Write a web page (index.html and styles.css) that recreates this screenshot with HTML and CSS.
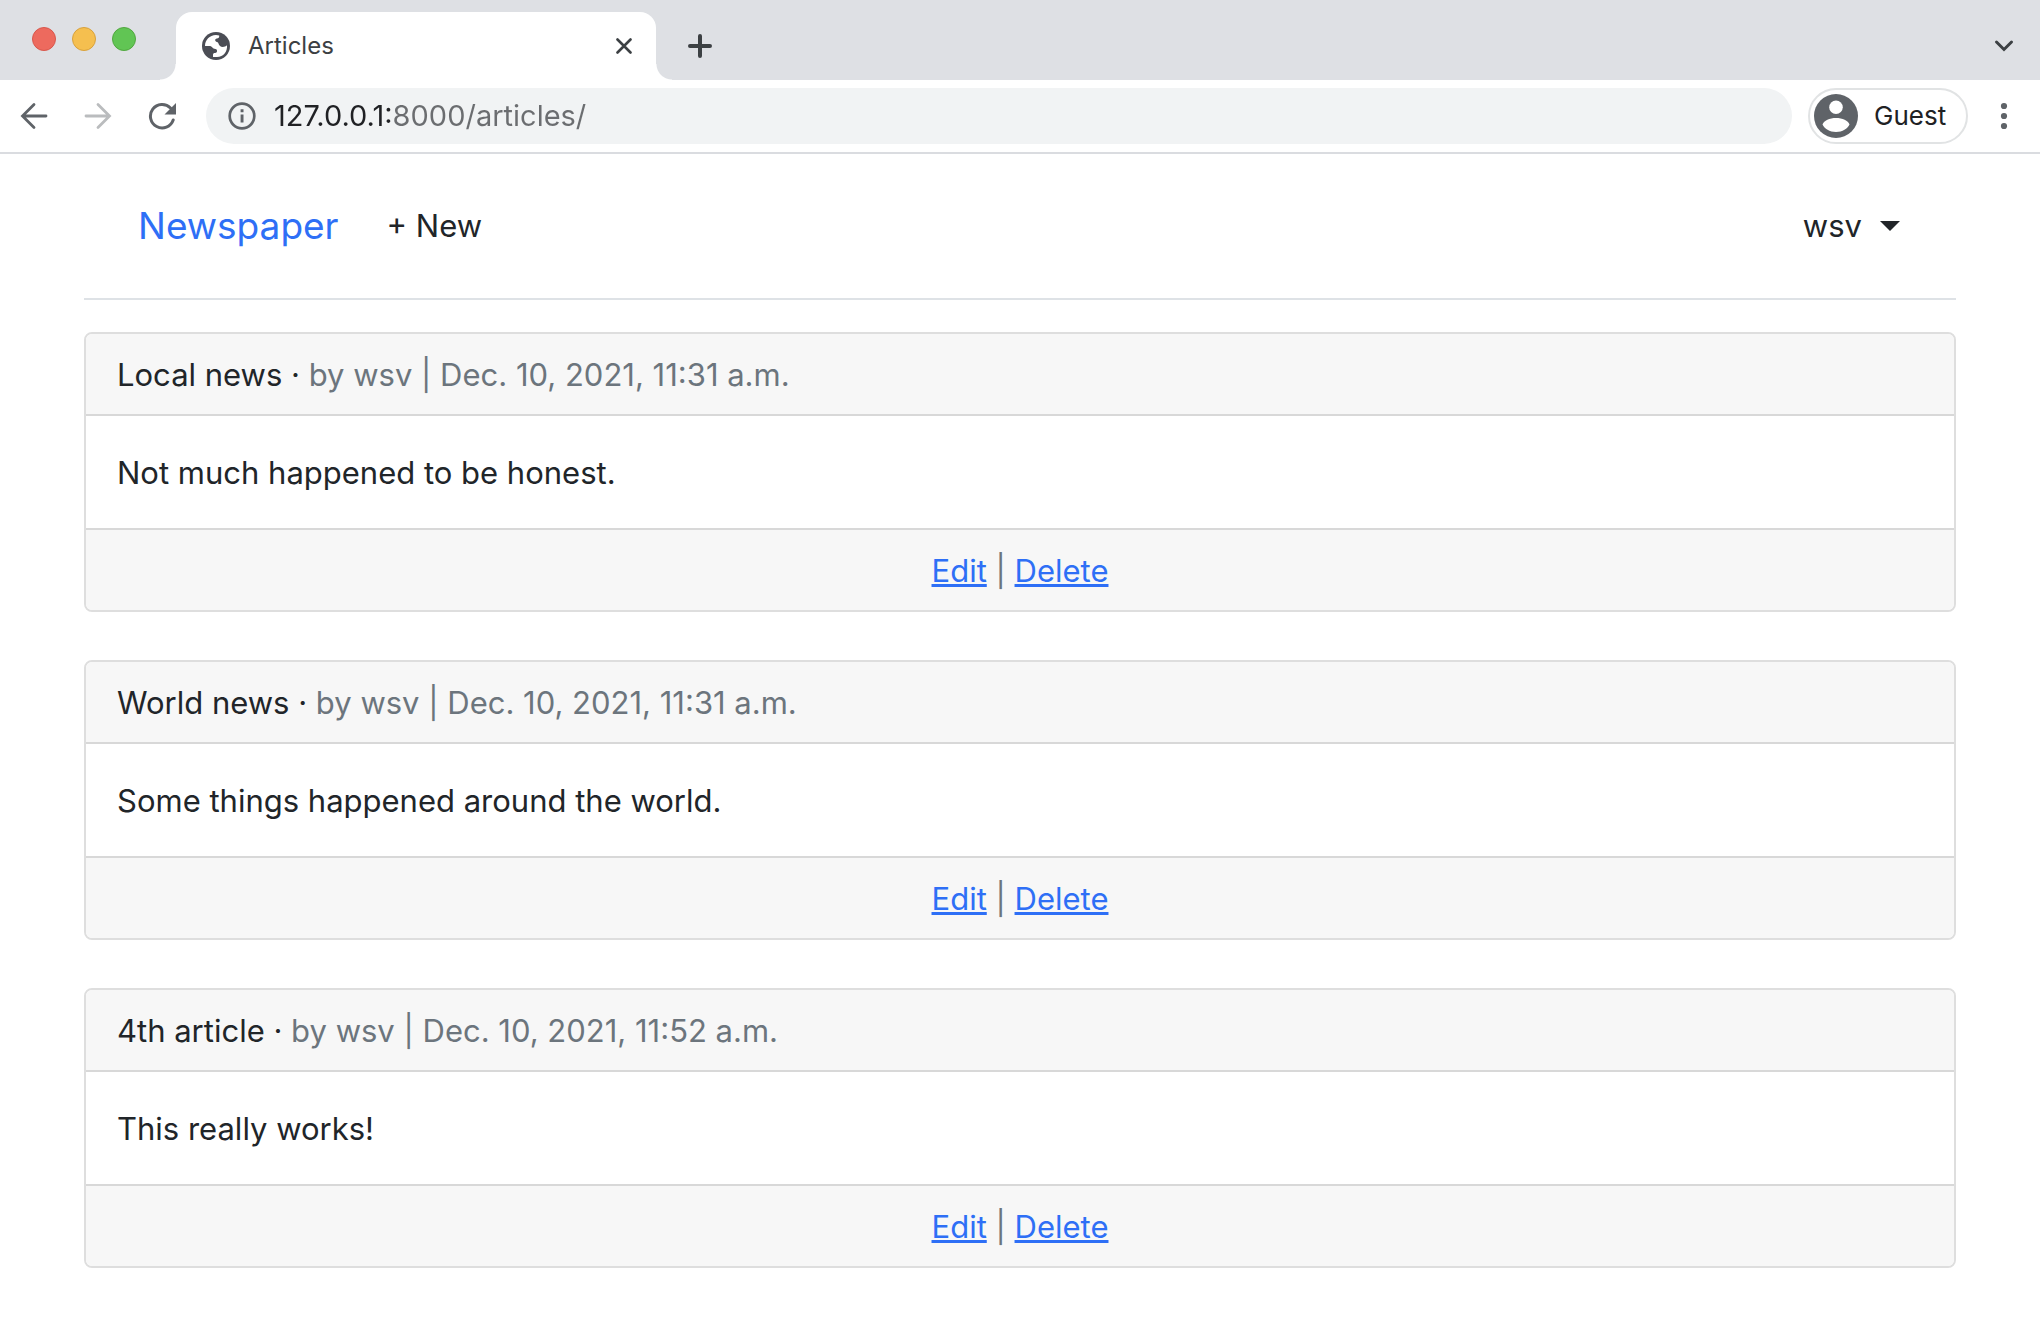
FILE: index.html
```html
<!DOCTYPE html>
<html lang="en">
<head>
<meta charset="utf-8">
<meta name="viewport" content="width=device-width, initial-scale=1">
<title>Articles</title>
<link rel="stylesheet" href="styles.css">
</head>
<body>
<div class="tab-strip">
  <div class="window-controls">
    <button class="light light-close" aria-label="Close window"></button>
    <button class="light light-minimize" aria-label="Minimize window"></button>
    <button class="light light-zoom" aria-label="Zoom window"></button>
  </div>
  <div class="tab">
    <svg width="28" height="28" viewBox="0 0 28 28" aria-hidden="true">
      <circle cx="14" cy="14" r="14" fill="#4b4d55"/>
      <path fill="#fff" d="M3 14C3 8 7.500 3.200 14 3l3.200.6C17.500 5.500 16.500 6.400 14.800 6.600 12.500 7 12.800 9.500 15 10c1.800.4 1.200 2.500 3 4 1.700 1.400 5 1.200 7-.8.600 6.300-3.500 11.600-10 11.800h-4v-2.200c0-1.200.7-1.800 2-1.800 1.600 0 2.200-.8 2-2.400-.2-1.500-1-1.800-2.600-1.900-2-.1-2.200-2.700-5-2.700z"/>
    </svg>
    <span class="tab-title">Articles</span>
    <button class="icon-button" aria-label="Close tab">
      <svg width="16" height="16" viewBox="0 0 16 16"><path d="M1.500 1.500l13 13M14.500 1.500l-13 13" stroke="#3c4043" stroke-width="2.600" stroke-linecap="round"/></svg>
    </button>
  </div>
  <button class="icon-button new-tab" aria-label="New tab">
    <svg width="24" height="24" viewBox="0 0 24 24"><path d="M12 2v20M2 12h20" stroke="#3c4043" stroke-width="4" stroke-linecap="round"/></svg>
  </button>
  <button class="icon-button tab-search" aria-label="Search tabs">
    <svg width="20" height="14" viewBox="0 0 20 14"><path d="M2.500 3l7.500 7.500L17.500 3" fill="none" stroke="#3c4043" stroke-width="3" stroke-linecap="round"/></svg>
  </button>
</div>
<div class="toolbar">
  <div class="nav-buttons">
    <button class="icon-button" aria-label="Back">
      <svg width="28" height="28" viewBox="0 0 28 28"><path d="M26 14H3M14 2.500L2.500 14 14 25.500" fill="none" stroke="#5f6368" stroke-width="2.800" stroke-linecap="round"/></svg>
    </button>
    <button class="icon-button" aria-label="Forward" disabled>
      <svg width="28" height="28" viewBox="0 0 28 28"><path d="M2 14h23M14 2.500L25.500 14 14 25.500" fill="none" stroke="#babcbe" stroke-width="2.800" stroke-linecap="round"/></svg>
    </button>
    <button class="icon-button" aria-label="Reload">
      <svg width="28" height="28" viewBox="0 0 28 28"><path d="M25.200 18A11.700 11.700 0 1 1 22.500 6" fill="none" stroke="#5f6368" stroke-width="3" stroke-linecap="round"/><path d="M28 1v11.500H16.500z" fill="#5f6368"/></svg>
    </button>
  </div>
  <div class="omnibox">
    <button class="icon-button" aria-label="View site information">
      <svg width="28" height="28" viewBox="0 0 28 28"><circle cx="14" cy="14" r="12.300" fill="none" stroke="#5f6368" stroke-width="2.700"/><path d="M12.600 12.500h2.900v8h-2.900zM12.600 7.300h2.900v2.900h-2.900z" fill="#5f6368"/></svg>
    </button>
    <input class="address" type="text" aria-label="Address" value="127.0.0.1:8000/articles/" spellcheck="false">
  </div>
  <button class="profile">
    <svg width="44" height="44" viewBox="0 0 44 44" aria-hidden="true"><circle cx="22" cy="22" r="22" fill="#5f6368"/><circle cx="22" cy="13.300" r="6.800" fill="#fff"/><path d="M8.500 30.500c1.500-4 7-6.500 13.500-6.500s12 2.500 13.500 6.500c-2 4.300-7 7.500-13.500 7.500s-11.500-3.200-13.500-7.500z" fill="#fff"/></svg>
    <span>Guest</span>
  </button>
  <button class="icon-button" aria-label="Menu">
    <svg width="8" height="28" viewBox="0 0 8 28"><g fill="#5f6368"><circle cx="4" cy="4" r="3.100"/><circle cx="4" cy="14" r="3.100"/><circle cx="4" cy="24" r="3.100"/></g></svg>
  </button>
</div>
<div class="container">
  <header class="site-header">
    <a class="brand" href="#">Newspaper</a>
    <a class="new-link" href="#">+ New</a>
    <button class="user-menu" aria-haspopup="true">wsv<span class="caret"></span></button>
  </header>
  <main class="articles">
    <article class="card">
      <div class="card-header"><span>Local news</span> · <span class="muted">by wsv | Dec. 10, 2021, 11:31 a.m.</span></div>
      <div class="card-body">Not much happened to be honest.</div>
      <div class="card-footer"><a href="#">Edit</a> | <a href="#">Delete</a></div>
    </article>
    <article class="card">
      <div class="card-header"><span>World news</span> · <span class="muted">by wsv | Dec. 10, 2021, 11:31 a.m.</span></div>
      <div class="card-body">Some things happened around the world.</div>
      <div class="card-footer"><a href="#">Edit</a> | <a href="#">Delete</a></div>
    </article>
    <article class="card">
      <div class="card-header"><span>4th article</span> · <span class="muted">by wsv | Dec. 10, 2021, 11:52 a.m.</span></div>
      <div class="card-body">This really works!</div>
      <div class="card-footer"><a href="#">Edit</a> | <a href="#">Delete</a></div>
    </article>
  </main>
</div>
</body>
</html>
```
FILE: styles.css
```css
* {
  box-sizing: border-box;
}

body {
  margin: 0;
  background: #fff;
  color: #212529;
  font-family: Inter, "Noto Sans", sans-serif;
  font-size: 31px;
  line-height: 48px;
}

button,
input {
  margin: 0;
  padding: 0;
  border: 0;
  background: none;
  color: inherit;
  font: inherit;
}

svg {
  display: block;
  flex: none;
}

.icon-button {
  display: flex;
  align-items: center;
  justify-content: center;
  flex: none;
}

/* Tab strip */
.tab-strip {
  display: flex;
  height: 80px;
  padding-top: 12px;
  background: #dee0e4;
}

.window-controls {
  display: flex;
  gap: 16px;
  width: 176px;
  padding: 15px 0 0 32px;
}

.light {
  width: 24px;
  height: 24px;
  border: 1px solid;
  border-radius: 50%;
}

.light-close {
  background: #ed6a5e;
  border-color: #d8574c;
}

.light-minimize {
  background: #f5bf4f;
  border-color: #d8a13c;
}

.light-zoom {
  background: #61c554;
  border-color: #51a73f;
}

.tab {
  position: relative;
  display: flex;
  align-items: center;
  width: 480px;
  height: 68px;
  padding: 0 24px 0 26px;
  background: #fff;
  border-radius: 16px 16px 0 0;
}

.tab::before,
.tab::after {
  content: "";
  position: absolute;
  bottom: 0;
  width: 16px;
  height: 16px;
}

.tab::before {
  right: 100%;
  background: radial-gradient(circle at 0 0, transparent 15px, #fff 16px);
}

.tab::after {
  left: 100%;
  background: radial-gradient(circle at 100% 0, transparent 15px, #fff 16px);
}

.tab-title {
  flex: 1;
  padding-left: 18px;
  color: #3c4043;
  font-size: 24px;
}

.new-tab {
  width: 56px;
  margin-left: 16px;
}

.tab-search {
  width: 40px;
  margin-left: auto;
  margin-right: 16px;
}

/* Toolbar */
.toolbar {
  display: flex;
  align-items: center;
  height: 74px;
  padding: 0 32px 0 20px;
  border-bottom: 2px solid #dadce0;
}

.nav-buttons {
  display: flex;
  gap: 36px;
  width: 186px;
}

.omnibox {
  display: flex;
  flex: 1;
  align-items: center;
  gap: 18px;
  height: 56px;
  padding: 0 22px;
  background: #f1f3f4;
  border-radius: 28px;
}

/* The host is drawn darker than the port and path that follow it. */
.address {
  flex: 1;
  min-width: 0;
  height: 48px;
  font-size: 29px;
  background: linear-gradient(to right, #202124 117px, #6b6d70 117px);
  -webkit-background-clip: text;
  background-clip: text;
  -webkit-text-fill-color: transparent;
}

.profile {
  display: flex;
  align-items: center;
  gap: 16px;
  width: 160px;
  height: 56px;
  margin: 0 32px 0 16px;
  padding-left: 4px;
  border: 2px solid #e1e3e4;
  border-radius: 28px;
  color: #202124;
  font-size: 26px;
}

/* Page */
.container {
  margin: 0 84px;
}

.site-header {
  display: flex;
  align-items: center;
  height: 146px;
  margin-bottom: 32px;
  padding: 0 56px 0 54px;
  border-bottom: 2px solid #dee2e6;
}

.brand {
  color: #2e6ff6;
  font-size: 37px;
  text-decoration: none;
}

.new-link {
  margin-left: 48px;
  color: #212529;
  text-decoration: none;
}

.user-menu {
  display: flex;
  align-items: center;
  gap: 18px;
  margin-left: auto;
}

.caret {
  border: 10px solid transparent;
  border-top-color: #212529;
  border-bottom: 0;
}

.articles {
  display: grid;
  gap: 48px;
}

.card {
  border: 2px solid #dedede;
  border-radius: 8px;
  overflow: hidden;
}

.card-header,
.card-footer {
  padding: 17px 31px 15px;
  background: #f7f7f7;
}

.card-header {
  border-bottom: 2px solid #d8d8d8;
}

.card-body {
  padding: 33px 31px 31px;
}

.card-footer {
  border-top: 2px solid #d8d8d8;
  color: #6c757d;
  text-align: center;
}

.card-footer a {
  color: #2e6ff6;
}

.muted {
  color: #6c757d;
}
```
